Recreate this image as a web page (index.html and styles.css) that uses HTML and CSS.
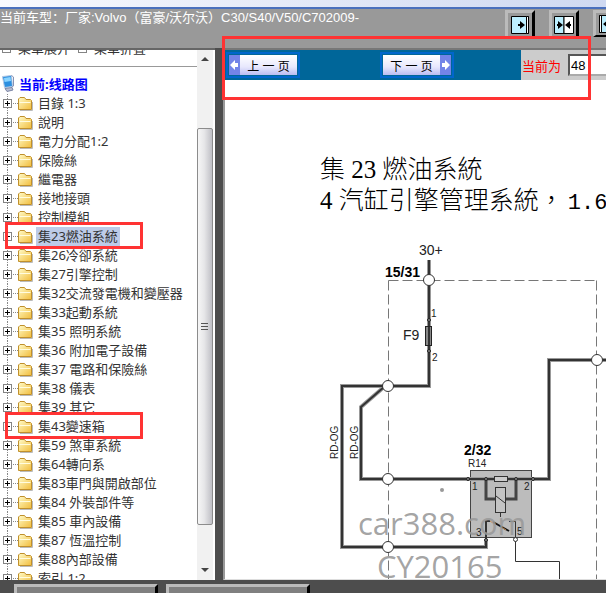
FILE: index.html
```html
<!DOCTYPE html>
<html lang="zh">
<head>
<meta charset="utf-8">
<title>线路图</title>
<link rel="stylesheet" href="styles.css">
</head>
<body>
<svg class="defs" width="0" height="0">
    <defs>
        <linearGradient id="gold" x1="0" y1="0" x2="1" y2="1">
            <stop offset="0" stop-color="#fffbc8"/>
            <stop offset="1" stop-color="#f2bd3c"/>
        </linearGradient>
        <symbol id="node" viewBox="0 0 36 19">
            <path d="M7.500 0V19M13 9.500H18" fill="none" stroke="#888" stroke-dasharray="1 1"/>
            <rect x="3.500" y="5.500" width="8" height="8" fill="#fff" stroke="#848484"/>
            <path d="M5 9.500H10M7.500 7V12" stroke="#000"/>
            <path d="M20 16.500H32.500V8" fill="none" stroke="#bbb"/>
            <path d="M18.500 15.500V5L20 3.500H24.500L26 5.500H30.500L31.500 6.500V15.500Z" fill="url(#gold)" stroke="#c0902c"/>
            <path d="M19.500 8.500H30.500" stroke="#fffce0"/>
        </symbol>
        <g id="wires">
            <path d="M429 260V386H342V547H486V540"/>
            <path d="M384 387L361 407V479H549V360H606"/>
        </g>
    </defs>
</svg>
<div class="chrome"></div>
<div class="header">
    <div class="car">当前车型：厂家:Volvo（富豪/沃尔沃）C30/S40/V50/C702009-</div>
    <div class="tools">
        <button class="tool" type="button" aria-label="右"><svg width="18" height="18"><path fill="#bdefff" stroke="#000" d="M.5 .5H17.500V17.500H.5Z"/><path fill="#fff" stroke="#000" d="M15.500 .5H17.500V17.500H15.500Z"/><path d="M7 8H9V5L14 9L9 13V10H7Z"/></svg></button>
        <button class="tool" type="button" aria-label="中"><svg width="20" height="18"><path fill="#bdefff" stroke="#000" d="M.5 .5H10V17.500H.5Z"/><path fill="#fff" stroke="#000" d="M10 .5H19.500V17.500H10Z"/><path d="M3 8H4V5L9 9L4 13V10H3ZM17 8H16V5L11 9L16 13V10H17Z"/></svg></button>
        <button class="tool" type="button" aria-label="左"><svg width="18" height="18"><path fill="#bdefff" stroke="#000" d="M.5 .5H17.500V17.500H.5Z"/><path fill="#fff" stroke="#000" d="M.5 .5H2.500V17.500H.5Z"/><path d="M11 8H9V5L4 9L9 13V10H11Z"/></svg></button>
    </div>
</div>
<div class="main">
    <div class="left">
        <div class="tree">
            <div class="menu">
                <a href="#"><i></i>菜單展开</a>
                <a href="#"><i></i>菜單折叠</a>
            </div>
            <hr>
            <div class="root">
                <svg width="15" height="18"><path d="M2.500 1.500L11.500 .5L12.500 11.500L4.500 12.500Z" fill="#2b8fe0" stroke="#b5c9e4"/><path d="M4 3L10.500 2L11 6L4.500 7Z" fill="#8ad4ff"/><path d="M11.500 .5L13.500 2V11L12 12" fill="none" stroke="#8793b5"/><path d="M5 13.500L12 12.500L13 15L7 16.500Z" fill="#b9bfd2" stroke="#7b85a5"/></svg>
                <span>当前:线路图</span>
            </div>
            <ul>
                <li><svg><use href="#node"/></svg><a href="#">目錄 1:3</a></li>
                <li><svg><use href="#node"/></svg><a href="#">說明</a></li>
                <li><svg><use href="#node"/></svg><a href="#">電力分配1:2</a></li>
                <li><svg><use href="#node"/></svg><a href="#">保險絲</a></li>
                <li><svg><use href="#node"/></svg><a href="#">繼電器</a></li>
                <li><svg><use href="#node"/></svg><a href="#">接地接頭</a></li>
                <li><svg><use href="#node"/></svg><a href="#">控制模組</a></li>
                <li class="marked"><svg><use href="#node"/></svg><a class="on" href="#">集23燃油系統</a></li>
                <li><svg><use href="#node"/></svg><a href="#">集26冷卻系統</a></li>
                <li><svg><use href="#node"/></svg><a href="#">集27引擎控制</a></li>
                <li><svg><use href="#node"/></svg><a href="#">集32交流發電機和變壓器</a></li>
                <li><svg><use href="#node"/></svg><a href="#">集33起動系統</a></li>
                <li><svg><use href="#node"/></svg><a href="#">集35 照明系統</a></li>
                <li><svg><use href="#node"/></svg><a href="#">集36 附加電子設備</a></li>
                <li><svg><use href="#node"/></svg><a href="#">集37 電路和保險絲</a></li>
                <li><svg><use href="#node"/></svg><a href="#">集38 儀表</a></li>
                <li><svg><use href="#node"/></svg><a href="#">集39 其它</a></li>
                <li class="marked"><svg><use href="#node"/></svg><a href="#">集43變速箱</a></li>
                <li><svg><use href="#node"/></svg><a href="#">集59 煞車系統</a></li>
                <li><svg><use href="#node"/></svg><a href="#">集64轉向系</a></li>
                <li><svg><use href="#node"/></svg><a href="#">集83車門與開啟部位</a></li>
                <li><svg><use href="#node"/></svg><a href="#">集84 外裝部件等</a></li>
                <li><svg><use href="#node"/></svg><a href="#">集85 車內設備</a></li>
                <li><svg><use href="#node"/></svg><a href="#">集87 恆溫控制</a></li>
                <li><svg><use href="#node"/></svg><a href="#">集88內部設備</a></li>
                <li><svg><use href="#node"/></svg><a href="#">索引 1:2</a></li>
            </ul>
        </div>
        <div class="scroll">
            <svg width="16" height="18"><path d="M4 11L8 7L12 11Z" fill="#444"/></svg>
            <div class="track">
                <div class="thumb"><svg width="8" height="9"><path d="M0 1.500H7M0 4.500H7M0 7.500H7" stroke="#555"/></svg></div>
            </div>
            <svg width="16" height="18"><path d="M4 6L8 10L12 6Z" fill="#444"/></svg>
        </div>
    </div>
    <div class="right">
        <div class="bar">
            <div class="pager">
                <button class="page" type="button"><svg width="11" height="20"><path d="M0 0H11V20H0Z" fill="#7384e8"/><path d="M1 10L6 5V8H9V12H6V15Z" fill="#fff"/></svg><span>上 一 页</span></button>
                <button class="page" type="button"><span>下 一 页</span><svg width="11" height="20"><path d="M0 0H11V20H0Z" fill="#7384e8"/><path d="M10 10L5 5V8H2V12H5V15Z" fill="#fff"/></svg></button>
            </div>
            <div class="current">
                <label for="page">当前为</label>
                <input id="page" type="text" value="48">
            </div>
        </div>
        <div class="doc">
            <div class="title" lang="zh-Hant">集 23 燃油系統<br>4 汽缸引擎管理系統，<span>1.6</span></div>
            <svg class="diagram" width="381" height="363" viewBox="225 216 381 363">
                <path class="dash" d="M388.500 280.500H597M388.500 280.500V579M596.500 280.500V579"/>
                <rect x="470.500" y="470.500" width="61" height="67" fill="#bcbcbc" stroke="#444"/>
                <use href="#wires" class="halo"/>
                <use href="#wires" class="core"/>
                <path class="coil" d="M486 479V499H496M516 479V499H506"/>
                <path class="contact" d="M486 540V521H490"/>
                <path class="thin" d="M509 521.500H515.500V561.500H559.500V579M500.500 512V517"/>
                <path d="M493 522L509 531" stroke="#111" stroke-width="2"/>
                <path d="M490 521L493 523M503 528L506 530" stroke="#c68d4e"/>
                <rect x="425.500" y="326.500" width="6" height="19" fill="#888" stroke="#222"/>
                <path d="M429 327V345" stroke="#333" stroke-width="2"/>
                <rect x="494.500" y="476.500" width="13" height="5" fill="#ccc" stroke="#333"/>
                <rect x="495.500" y="487.500" width="10" height="25" fill="#c4c4c4" stroke="#333"/>
                <path class="thin" d="M496 496L505 503"/>
                <g class="joint">
                    <circle cx="429" cy="280" r="5.500"/>
                    <circle cx="388" cy="386" r="5.500"/>
                    <circle cx="388" cy="479" r="5.500"/>
                    <circle cx="388" cy="547" r="5.500"/>
                    <circle cx="597" cy="360" r="5.500"/>
                    <circle cx="515.500" cy="539.500" r="2"/>
                </g>
                <g class="pin">
                    <circle cx="429" cy="320" r="1.500"/>
                    <circle cx="429" cy="351" r="1.500"/>
                    <circle cx="468" cy="479" r="1.500"/>
                    <circle cx="486" cy="479" r="1.500"/>
                    <circle cx="516" cy="479" r="1.500"/>
                    <circle cx="533" cy="479" r="1.500"/>
                    <circle cx="486" cy="540" r="1.500"/>
                </g>
                <text class="big" x="419" y="255">30+</text>
                <text class="bold" x="385" y="277">15/31</text>
                <text class="big" x="403" y="340">F9</text>
                <text x="431" y="317">1</text>
                <text x="432" y="361">2</text>
                <text transform="translate(338 459) rotate(-90)">RD-OG</text>
                <text transform="translate(358 459) rotate(-90)">RD-OG</text>
                <text class="bold" x="464" y="455">2/32</text>
                <text x="468" y="467">R14</text>
                <text x="472" y="490">1</text>
                <text x="524" y="490">2</text>
                <text x="476" y="536">3</text>
                <text x="517" y="535">5</text>
                <circle cx="442" cy="490" r="2" fill="#999"/>
                <text class="mark" x="358" y="535">car388.com</text>
                <text class="mark" x="377" y="578">CY20165</text>
            </svg>
        </div>
    </div>
</div>
<div class="footer">
    <div class="tab"></div>
    <div class="tab"></div>
</div>
<div class="redbox"></div>
</body>
</html>
```
FILE: styles.css
```css
body {
    margin: 0;
    height: 100vh;
    display: flex;
    flex-direction: column;
    overflow: hidden;
    background-color: #4d4d4d;
    font-family: "Liberation Sans", "Noto Sans CJK SC", sans-serif;
    font-size: 13px;
}
.defs {
    position: absolute;
}
button {
    font-family: inherit;
    padding: 0;
    border: 0;
}
a {
    color: #333;
    text-decoration: none;
}
.chrome {
    flex: none;
    height: 7px;
    background: linear-gradient(to right, #f8f9fe, #cfd9f1);
    border-bottom: 2px solid #4a70bd;
}
.header {
    flex: none;
    display: flex;
    height: 39px;
    background-color: #999;
    color: #fff;
    white-space: nowrap;
}
.car {
    flex: 0 0 505px;
    line-height: 18px;
}
.tools {
    display: flex;
    gap: 14px;
    padding-top: 1px;
}
.tool {
    box-sizing: border-box;
    display: flex;
    align-items: center;
    justify-content: center;
    width: 30px;
    height: 27px;
    background-color: #999;
    border: 3px solid #bbb;
    border-right-color: #000;
    border-bottom: 0;
}
.tool:last-child {
    border-bottom: 2px solid #000;
}
.main {
    flex: 1;
    min-height: 0;
    display: flex;
    gap: 8px;
}

/* left menu */
.left {
    flex: 0 0 215px;
    box-sizing: border-box;
    display: flex;
    padding-right: 2px;
    background-color: #fff;
    border-top: 2px solid #666;
    overflow: hidden;
}
.tree {
    flex: 1;
    min-width: 0;
    overflow: hidden;
    font-family: "Noto Sans", "Noto Sans CJK TC", sans-serif;
    line-height: 19px;
    white-space: nowrap;
}
.menu {
    display: flex;
    gap: 8px;
    height: 19px;
    margin-top: -11px;
    padding-left: 2px;
}
.menu a {
    display: flex;
    align-items: center;
    gap: 7px;
}
.menu i {
    width: 7px;
    height: 7px;
    border: 1px solid #848484;
}
.tree hr {
    margin: 8px 0;
    border: 0;
    border-top: 1px solid #999;
}
.root {
    display: flex;
    gap: 4px;
    height: 19px;
    color: #00f;
    font-weight: bold;
    font-family: "Noto Sans", "Noto Sans CJK SC", sans-serif;
}
.tree ul {
    margin: 0;
    padding: 0;
    list-style: none;
}
.tree li {
    display: flex;
    height: 19px;
    position: relative;
}
.tree li svg {
    width: 36px;
    height: 19px;
}
.tree li a {
    padding: 0 2px;
}
.tree .on {
    background-color: #bdcbe8;
}
.marked::after {
    content: "";
    position: absolute;
    left: 5px;
    top: -5px;
    width: 132px;
    height: 21px;
    border: 3px solid #f33;
    z-index: 1;
}
.scroll {
    flex: 0 0 16px;
    display: flex;
    flex-direction: column;
    background-color: #f1f1f1;
}
.track {
    flex: 1;
    display: flex;
    flex-direction: column;
    padding: 60px 0 37px;
}
.thumb {
    flex: 1;
    display: flex;
    align-items: center;
    justify-content: center;
    border: 1px solid #8c8c8c;
    border-radius: 2px;
    background: linear-gradient(to right, #f6f6f6, #e6e6e8 45%, #bfbfc5);
}

/* right page */
.right {
    flex: 1;
    min-width: 0;
    box-sizing: border-box;
    display: flex;
    flex-direction: column;
    background-color: #fff;
    border-top: 2px solid #777;
    border-left: 2px solid #999;
    border-bottom: 1px solid #ddd;
    overflow: hidden;
}
.bar {
    flex: none;
    display: flex;
    height: 30px;
}
.pager {
    flex: 0 0 296px;
    box-sizing: border-box;
    display: flex;
    align-items: center;
    gap: 80px;
    padding-left: 1px;
    background-color: #069;
}
.page {
    box-sizing: border-box;
    display: flex;
    align-items: center;
    width: 74px;
    height: 26px;
    padding: 1px;
    border: 2px solid #06c;
    background: linear-gradient(#fff, #e7e7fd 60%, #bbbcf2) content-box;
    font-size: 12px;
}
.page span {
    flex: 1;
    text-align: center;
}
.current {
    flex: 1;
    display: flex;
    align-items: center;
    gap: 7px;
    padding-left: 1px;
    background-color: #ccc;
    color: #f00;
    white-space: nowrap;
}
.current input {
    box-sizing: border-box;
    width: 60px;
    height: 22px;
    padding: 1px;
    border: 2px inset #aaa;
    font-family: inherit;
    font-size: 13px;
}
.doc {
    flex: 1;
    min-height: 0;
    overflow: hidden;
}
.title {
    height: 62px;
    padding: 74px 0 0 95px;
    font-family: "Liberation Serif", "Noto Sans CJK TC", serif;
    font-size: 25px;
    font-weight: 300;
    line-height: 31px;
    white-space: nowrap;
}
.title span {
    padding-left: 4px;
    font-family: "Liberation Mono", monospace;
    font-size: 22px;
    line-height: 1;
}
.diagram {
    display: block;
    font-size: 10px;
    fill: #222;
}
.diagram .big {
    font-size: 14px;
}
.diagram .bold {
    font-size: 14px;
    font-weight: bold;
    fill: #000;
}
.diagram .mark {
    font-family: "Open Sans", sans-serif;
    font-size: 31px;
    fill: #999;
    fill-opacity: 0.9;
}
.dash {
    fill: none;
    stroke: #777;
    stroke-dasharray: 10 4;
}
.halo {
    fill: none;
    stroke: #999;
    stroke-width: 4;
}
.core {
    fill: none;
    stroke: #333;
    stroke-width: 2;
}
.coil {
    fill: none;
    stroke: #444;
    stroke-width: 3;
}
.contact {
    fill: none;
    stroke: #333;
    stroke-width: 2;
}
.thin {
    fill: none;
    stroke: #333;
}
.joint {
    fill: #fff;
    stroke: #333;
}
.pin {
    fill: #888;
    stroke: #222;
}

/* bottom strip */
.footer {
    flex: none;
    display: flex;
    gap: 8px;
    height: 9px;
    padding: 4px 0 0 14px;
    overflow: hidden;
}
.tab {
    box-sizing: border-box;
    width: 144px;
    height: 24px;
    background-color: #808080;
    border: 3px solid #bbb;
    border-right-color: #000;
}
.redbox {
    position: absolute;
    left: 222px;
    top: 36px;
    width: 363px;
    height: 58px;
    border: 3px solid #f33;
}
```
